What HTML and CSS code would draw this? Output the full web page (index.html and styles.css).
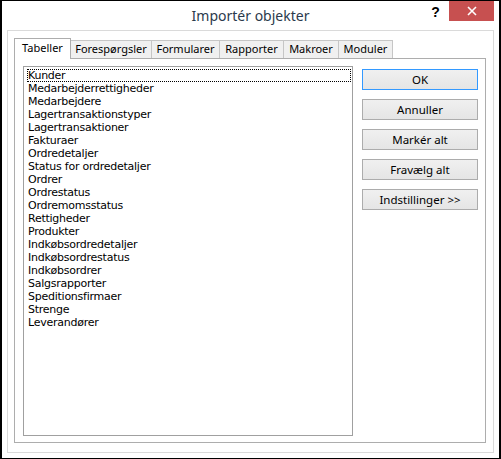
FILE: index.html
```html
<!DOCTYPE html>
<html lang="da">
<head>
<meta charset="utf-8">
<title>Importér objekter</title>
<link rel="stylesheet" href="styles.css">
</head>
<body>
<div class="window">
  <div class="titlebar">
    <div></div>
    <div class="title">Importér objekter</div>
    <div class="controls">
      <div class="help">?</div>
      <div class="close">
        <svg width="10" height="10" viewBox="0 0 10 10"><path d="M1 1 L9 9 M9 1 L1 9" stroke="#fff" stroke-width="1.6" fill="none"/></svg>
      </div>
    </div>
  </div>
  <div class="frame">
    <div class="tabs">
      <div class="tab selected w1">Tabeller</div>
      <div class="tab w2">Forespørgsler</div>
      <div class="tab w3">Formularer</div>
      <div class="tab w4">Rapporter</div>
      <div class="tab w5">Makroer</div>
      <div class="tab w6">Moduler</div>
    </div>
    <div class="panel">
      <div class="list">
        <div class="item focus">Kunder</div>
        <div class="item">Medarbejderrettigheder</div>
        <div class="item">Medarbejdere</div>
        <div class="item">Lagertransaktionstyper</div>
        <div class="item">Lagertransaktioner</div>
        <div class="item">Fakturaer</div>
        <div class="item">Ordredetaljer</div>
        <div class="item">Status for ordredetaljer</div>
        <div class="item">Ordrer</div>
        <div class="item">Ordrestatus</div>
        <div class="item">Ordremomsstatus</div>
        <div class="item">Rettigheder</div>
        <div class="item">Produkter</div>
        <div class="item">Indkøbsordredetaljer</div>
        <div class="item">Indkøbsordrestatus</div>
        <div class="item">Indkøbsordrer</div>
        <div class="item">Salgsrapporter</div>
        <div class="item">Speditionsfirmaer</div>
        <div class="item">Strenge</div>
        <div class="item">Leverandører</div>
      </div>
      <div class="buttons">
        <div class="btn default">OK</div>
        <div class="btn">Annuller</div>
        <div class="btn">Markér alt</div>
        <div class="btn">Fravælg alt</div>
        <div class="btn">Indstillinger &gt;&gt;</div>
      </div>
    </div>
  </div>
</div>
</body>
</html>
```
FILE: styles.css
```css
* { box-sizing: border-box; }
html, body { margin: 0; padding: 0; background: #fff; }
body { font-family: "Noto Sans", sans-serif; }

.window {
  width: 501px;
  height: 459px;
  border: solid #000;
  border-width: 1px 2px 1px 2px;
  background: #fff;
  display: flex;
  flex-direction: column;
}

.titlebar {
  height: 29px;
  flex: none;
  display: grid;
  grid-template-columns: 1fr auto 1fr;
}
.title {
  font-size: 14px;
  line-height: 20px;
  padding-top: 5px;
  color: #2b3a4c;
  white-space: nowrap;
}
.controls {
  justify-self: end;
  display: flex;
  align-items: flex-start;
  margin-right: 5px;
}
.help {
  width: 27px;
  text-align: center;
  font-family: "Liberation Sans", sans-serif;
  font-weight: bold;
  font-size: 14px;
  line-height: 16px;
  padding-top: 3px;
  color: #000;
}
.close {
  width: 45px;
  height: 20px;
  background: #c75050;
  display: flex;
  align-items: center;
  justify-content: center;
}
.close svg { display: block; }

.frame {
  flex: 1;
  margin: 0 5px 5px 5px;
  border: 1px solid #dadada;
  padding: 7px 7px 9px 6px;
  display: flex;
  flex-direction: column;
}

.tabs {
  display: flex;
  align-items: flex-end;
  height: 20px;
  flex: none;
}
.tab {
  height: 18px;
  border: 1px solid #c6c6c6;
  border-left: none;
  border-bottom: none;
  background: #f0f0f0;
  font-size: 11px;
  line-height: 16px;
  text-align: center;
  color: #000;
  white-space: nowrap;
}
.tab.selected {
  height: 21px;
  margin-bottom: -1px;
  border: 1px solid #adadad;
  border-bottom: none;
  background: #fff;
  position: relative;
  z-index: 1;
  line-height: 18px;
}
.w1 { width: 57px; }
.w2 { width: 81px; }
.w3 { width: 68px; }
.w4 { width: 64px; }
.w5 { width: 55px; }
.w6 { width: 54px; }

.panel {
  flex: 1;
  border: 1px solid #adadad;
  background: #fff;
  padding: 7px 0 6px 8px;
  display: flex;
  gap: 9px;
}

.list {
  width: 330px;
  border: 1px solid #a0a0a0;
  padding: 2px 1px 0 3px;
  font-family: "DejaVu Sans", sans-serif;
  font-size: 11px;
  letter-spacing: -0.25px;
  color: #000;
}
.item {
  height: 13px;
  line-height: 13px;
  padding-left: 1px;
  white-space: nowrap;
}
.item.focus {
  border: 1px dotted #000;
  padding-left: 0;
  line-height: 11px;
}

.buttons {
  width: 116px;
  padding-top: 3px;
  display: flex;
  flex-direction: column;
  gap: 9px;
}
.btn {
  height: 21px;
  border: 1px solid #acacac;
  background: linear-gradient(#f0f0f0, #e5e5e5);
  font-size: 11.5px;
  line-height: 19px;
  text-align: center;
  color: #000;
  white-space: nowrap;
}
.btn.default { border-color: #3399ff; }
```
